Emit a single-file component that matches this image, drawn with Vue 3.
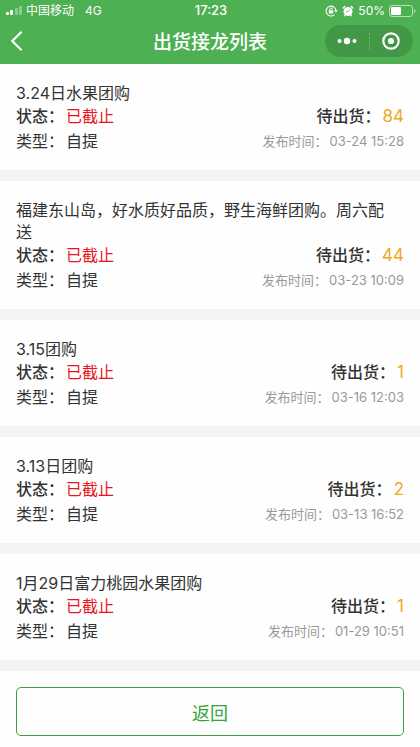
<script setup>
const orders = [
  { title: '3.24日水果团购', status: '已截止', type: '自提', pending: 84, time: '03-24 15:28' },
  { title: '福建东山岛，好水质好品质，野生海鲜团购。周六配送', status: '已截止', type: '自提', pending: 44, time: '03-23 10:09' },
  { title: '3.15团购', status: '已截止', type: '自提', pending: 1, time: '03-16 12:03' },
  { title: '3.13日团购', status: '已截止', type: '自提', pending: 2, time: '03-13 16:52' },
  { title: '1月29日富力桃园水果团购', status: '已截止', type: '自提', pending: 1, time: '01-29 10:51' },
]
</script>

<template>
  <div class="page">
    <header class="header">
      <div class="status-bar">
        <div class="carrier">
          <svg width="17" height="10" viewBox="0 0 17 10" aria-hidden="true">
            <rect x="0" y="6" width="3" height="3" rx="1" fill="#fff" />
            <rect x="4" y="4" width="3" height="5" rx="1" fill="#fff" />
            <rect x="9" y="2" width="3" height="7" rx="1" fill="#fff" opacity=".35" />
            <rect x="13" y="0" width="3" height="9" rx="1" fill="#fff" opacity=".35" />
          </svg>
          <span class="operator">中国移动</span>
          <span>4G</span>
        </div>
        <span class="clock">17:23</span>
        <div class="indicators">
          <svg width="13" height="12" viewBox="0 0 13 12" fill="none" stroke="#fff" aria-hidden="true">
            <path d="M9.4 9.6A4.9 4.9 0 1 1 10.9 6" stroke-width="1.1" />
            <path d="M9 5.2h3.8L10.9 7.6z" fill="#fff" stroke="none" />
            <rect x="3.8" y="5.2" width="4.4" height="3.3" rx=".5" fill="#fff" stroke="none" />
            <path d="M4.7 5.4V4.3a1.3 1.3 0 0 1 2.6 0v1.1" stroke-width=".9" />
          </svg>
          <svg width="12" height="12" viewBox="0 0 12 12" aria-hidden="true">
            <circle cx="6" cy="6.4" r="4.5" fill="#fff" />
            <path d="M1.2 3 2.8 1.5M10.8 3 9.2 1.5M3.2 10l-.5.7M8.8 10l.5.7" stroke="#fff" stroke-width="1.3" stroke-linecap="round" />
            <path d="M7.8 4.6 6 6.6H4.4" fill="none" stroke="#4db052" stroke-width=".8" />
          </svg>
          <span>50%</span>
          <svg width="27" height="12" viewBox="0 0 27 12" aria-hidden="true">
            <rect x=".5" y=".5" width="23" height="11" rx="2.5" fill="none" stroke="#fff" stroke-opacity=".6" />
            <rect x="2" y="2" width="10" height="8" rx="1" fill="#fff" />
            <path d="M25 4v4q1.5-.6 1.5-2T25 4z" fill="#fff" opacity=".6" />
          </svg>
        </div>
      </div>
      <div class="nav-bar">
        <button class="back" type="button" aria-label="返回上一页">
          <svg width="18" height="22" viewBox="0 0 18 22" fill="none" stroke="#fff" stroke-width="2.2" aria-hidden="true">
            <path d="M14.6 1.7 5.3 11l9.3 9.3" />
          </svg>
        </button>
        <h1 class="heading">出货接龙列表</h1>
        <div class="capsule">
          <button type="button" aria-label="更多">
            <svg width="20" height="8" viewBox="0 0 20 8" fill="#fff" aria-hidden="true">
              <circle cx="2.5" cy="4" r="2" />
              <circle cx="10" cy="4" r="3.2" />
              <circle cx="17.5" cy="4" r="2" />
            </svg>
          </button>
          <span class="divider"></span>
          <button type="button" aria-label="关闭">
            <svg width="18" height="18" viewBox="0 0 18 18" aria-hidden="true">
              <circle cx="9" cy="9" r="7.7" fill="none" stroke="#fff" stroke-width="2.2" />
              <circle cx="9" cy="9" r="3.1" fill="#fff" />
            </svg>
          </button>
        </div>
      </div>
    </header>

    <main class="list">
      <article v-for="order in orders" :key="order.time" class="card">
        <h2 class="title">{{ order.title }}</h2>
        <div class="row strong">
          <span>状态：<em class="closed">{{ order.status }}</em></span>
          <span>待出货：<em class="count">{{ order.pending }}</em></span>
        </div>
        <div class="row">
          <span>类型：<em>{{ order.type }}</em></span>
          <span class="time">发布时间：<em>{{ order.time }}</em></span>
        </div>
      </article>
    </main>

    <footer class="footer">
      <button class="return" type="button">返回</button>
    </footer>
  </div>
</template>

<style>
body {
  background: #fefefe;
}
</style>

<style scoped>
.page {
  font-family: Inter, "Noto Sans CJK SC", sans-serif;
  font-size: 16px;
  color: #333;
}
button {
  display: flex;
  align-items: center;
  justify-content: center;
  margin: 0;
  padding: 0;
  border: 0;
  background: none;
  font: inherit;
  cursor: pointer;
}
svg {
  display: block;
}
.header {
  padding-bottom: 3px;
  background: #4db052;
  color: #fff;
}
.status-bar,
.nav-bar {
  display: grid;
  grid-template-columns: 1fr auto 1fr;
  align-items: center;
}
.status-bar {
  height: 21px;
  padding: 0 4px 0 6px;
  font-size: 12px;
  line-height: 21px;
}
.carrier,
.indicators {
  display: flex;
  align-items: center;
}
.carrier {
  gap: 3px;
}
.operator {
  margin-right: 8px;
}
.clock {
  font-size: 13px;
  font-weight: 500;
}
.indicators {
  justify-content: flex-end;
  gap: 4px;
}
.nav-bar {
  height: 40px;
  padding: 0 7px;
}
.back {
  justify-self: start;
}
.heading {
  margin: 0;
  padding-top: 3px;
  font-size: 19px;
  line-height: 30px;
  font-weight: 500;
}
.capsule {
  justify-self: end;
  display: flex;
  align-items: center;
  width: 88px;
  height: 32px;
  border-radius: 16px;
  background: #429846;
}
.capsule button {
  flex: 1;
  height: 100%;
}
.divider {
  height: 16px;
  border-left: 1px dotted #79b97c;
}
.list {
  display: flex;
  flex-direction: column;
  gap: 11px;
  padding-bottom: 11px;
  background: #f3f3f3;
}
.card {
  padding: 18px 16px 16px;
  background: #fefefe;
}
.title {
  margin: 0;
  padding-right: 8px;
  font-size: 16px;
  line-height: 22px;
  font-weight: 400;
}
.row {
  display: flex;
  justify-content: space-between;
  line-height: 25px;
}
.strong {
  font-weight: 500;
}
em {
  margin-left: 2px;
  font-style: normal;
  font-weight: 400;
}
.closed {
  color: #e9141d;
}
.count {
  font-size: 17px;
  color: #efa920;
}
.time {
  font-size: 13px;
  color: #999;
}
.footer {
  padding: 16px;
}
.return {
  width: 100%;
  height: 49px;
  border: 1px solid #35a53a;
  border-radius: 5px;
  font-size: 18px;
  color: #35a53a;
}
</style>
